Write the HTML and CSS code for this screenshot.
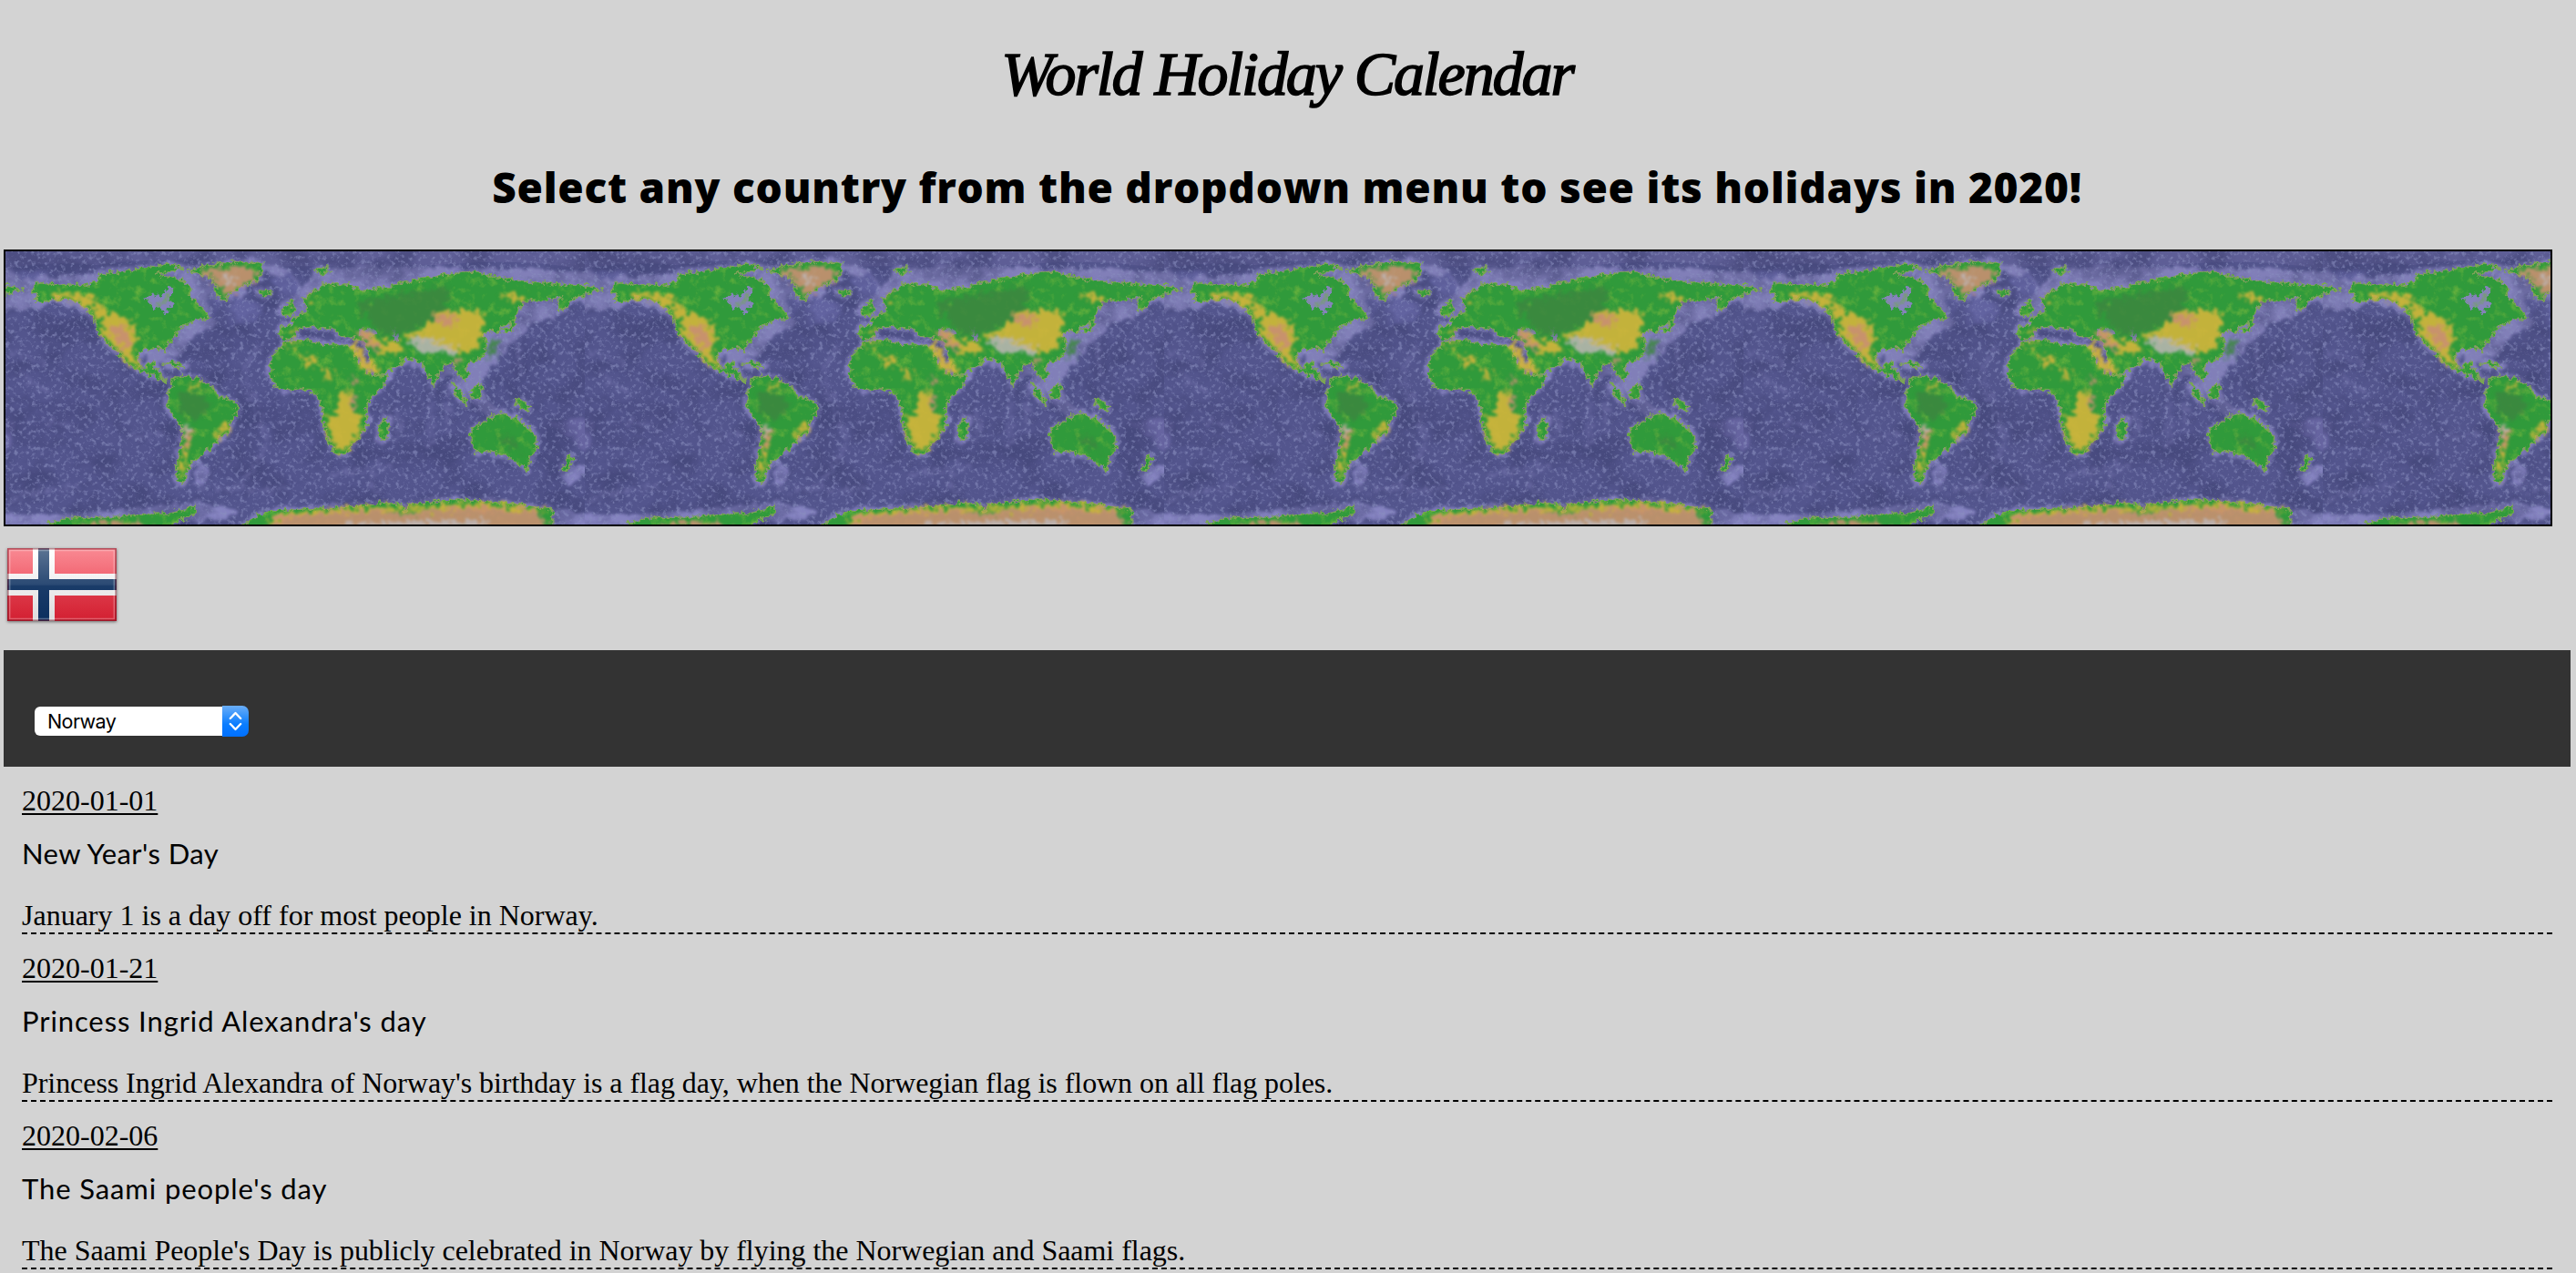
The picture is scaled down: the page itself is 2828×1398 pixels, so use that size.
FILE: index.html
```html
<!DOCTYPE html>
<html lang="en">
<head>
<meta charset="utf-8">
<title>World Holiday Calendar</title>
<link rel="stylesheet" href="styles.css">
</head>
<body>
<header>
  <h1 class="title">World Holiday Calendar</h1>
  <h2 class="subtitle">Select any country from the dropdown menu to see its holidays in 2020!</h2>
</header>

<div class="map">
<svg class="map-art" viewBox="0 0 2794 300" preserveAspectRatio="none" aria-hidden="true">
  <defs>
    <clipPath id="tile"><path d="M0 0h1908v900H0z"/></clipPath>
    <filter id="coast" x="-2%" y="-2%" width="104%" height="104%" color-interpolation-filters="sRGB">
      <feTurbulence type="fractalNoise" baseFrequency="0.07" numOctaves="3" seed="4" result="n"/>
      <feDisplacementMap in="SourceGraphic" in2="n" scale="30" xChannelSelector="R" yChannelSelector="G" result="d"/>
      <feTurbulence type="fractalNoise" baseFrequency="0.03" numOctaves="5" seed="31"/>
      <feColorMatrix values="0 0 0 0 .42  0 0 0 0 .70  0 0 0 0 .24  2.4 0 0 0 -1.25"/>
      <feComposite in2="d" operator="in" result="s"/>
      <feMerge><feMergeNode in="d"/><feMergeNode in="s"/></feMerge>
      <feGaussianBlur stdDeviation="1.8"/>
    </filter>
    <filter id="shelf" x="-5%" y="-5%" width="110%" height="110%" color-interpolation-filters="sRGB">
      <feTurbulence type="fractalNoise" baseFrequency="0.03" numOctaves="3" seed="9" result="n"/>
      <feDisplacementMap in="SourceGraphic" in2="n" scale="36" xChannelSelector="R" yChannelSelector="G"/>
      <feGaussianBlur stdDeviation="5"/>
    </filter>
    <filter id="relief" x="-5%" y="-5%" width="110%" height="110%" color-interpolation-filters="sRGB">
      <feTurbulence type="fractalNoise" baseFrequency="0.06" numOctaves="4" seed="12" result="n"/>
      <feDisplacementMap in="SourceGraphic" in2="n" scale="65" xChannelSelector="R" yChannelSelector="G"/>
      <feGaussianBlur stdDeviation="4.5"/>
    </filter>
    <filter id="seafloor" x="0" y="0" width="100%" height="100%" color-interpolation-filters="sRGB">
      <feTurbulence type="fractalNoise" baseFrequency="0.07" numOctaves="4" seed="21"/>
      <feColorMatrix values="0 0 0 0 .54  0 0 0 0 .56  0 0 0 0 .75  4 0 0 0 -2.1"/>
    </filter>
    <filter id="swell" x="0" y="0" width="100%" height="100%" color-interpolation-filters="sRGB">
      <feTurbulence type="fractalNoise" baseFrequency="0.008 0.01" numOctaves="5" seed="5"/>
      <feColorMatrix values="0 0 0 0 .24  0 0 0 0 .25  0 0 0 0 .44  3 0 0 0 -1.2"/>
    </filter>

    <g id="land">
      <path d="M112 128L138 122 200 130 300 128 325 112 330 92 400 85 470 72 560 62 600 72 560 85 510 92 560 104 600 112 630 140 620 165 640 175 650 195 680 215 688 240 650 240 620 255 590 275 575 300 548 325 545 350 532 338 500 336 462 345 452 368 458 398 480 402 490 382 510 385 505 404 525 412 530 432 548 446 515 436 480 418 440 402 415 385 395 355 370 335 345 310 322 285 318 250 295 215 260 185 220 175 180 170 145 188 115 178 128 160 108 150Z"/>
      <path d="M618 82L690 62 790 50 868 60 858 90 850 112 800 135 765 148 740 180 715 168 708 130 690 100Z"/>
      <path d="M568 440L600 428 650 438 690 455 715 490 780 520 782 548 760 575 755 610 725 630 690 670 655 695 630 715 610 760 600 785 580 770 585 710 598 650 600 600 570 560 552 525 556 480Z"/>
      <path d="M180 930L160 915 230 896 360 894 470 884 560 882 610 870 645 850 645 880 600 900 540 930Z"/>
      <path d="M790 930L850 888 920 870 1030 866 1130 862 1260 846 1320 852 1335 878 1350 852 1480 838 1560 838 1700 852 1820 870 1820 930Z"/>
      <path d="M545 388l30-6 30 12-8 6-35-6zM850 152l30-6 12 12-20 8zM1038 80l40-8 5 12-25 8zM0 130L40 134 70 146 20 156 -20 150Z"/>
      <path d="M925 210L945 195 958 180 975 215 970 228 935 228ZM925 268L960 262 965 240 985 228 1010 215 1000 172 1030 150 1080 122 1150 130 1190 150 1280 135 1360 112 1420 105 1480 92 1560 84 1640 105 1740 120 1860 128 1990 134 1990 145 1930 160 1880 175 1870 205 1840 212 1838 185 1850 168 1790 180 1720 182 1700 230 1685 255 1650 265 1645 285 1620 280 1590 290 1605 320 1595 360 1555 385 1530 395 1545 420 1535 445 1505 415 1490 385 1465 395 1440 430 1428 460 1412 430 1390 385 1360 372 1320 372 1330 385 1275 415 1240 425 1215 360 1205 320 1180 305 1130 300 1100 275 1050 270 1010 265 980 275 965 305 935 310 922 290Z"/>
      <path d="M940 320L1000 308 1030 315 1060 325 1130 325 1165 335 1180 380 1225 430 1278 425 1265 460 1220 500 1205 540 1210 590 1175 640 1140 680 1112 688 1090 660 1065 590 1062 540 1050 500 1020 475 975 472 940 478 905 460 890 420 892 370 915 345ZM1250 590l20-25 12 20-12 50-20 5z"/>
      <path d="M1555 600L1590 585 1620 560 1660 550 1690 575 1700 560 1720 580 1765 630 1768 665 1745 700 1735 740 1700 710 1660 690 1610 675 1570 682 1558 650 1548 625ZM1490 450l35 40 12 35-35-30zM1555 475l25-25 8 25-15 30-20-5zM1700 505l25 5 25 25-15 5-35-15zM1655 280l20-10 20-30 5 20-25 25zM1850 740l25-50 12 12-18 38z"/>
    </g>

    <g id="world" clip-path="url(#tile)">
      <rect width="1908" height="900" fill="#53558d"/>
      <path d="M0 0H1908V60Q1700 20 1430 45L900 50Q550 10 300 45Q130 30 0 60Z" fill="#5e5e96"/>
      <g filter="url(#shelf)" fill="none">
        <g transform="translate(-18 -18)">
          <path d="M-40 85Q130 75 160 105L320 85Q420 60 600 66T950 70L1000 150Q1010 60 1240 65T1460 75Q1680 70 2000 90V205Q1890 175 1850 185L1830 235 1755 250 1700 310 1640 370 1590 440 1600 500 1660 560 1620 580 1550 500 1480 420H1400L1240 300 960 240 900 215 960 140 880 80 820 140 740 250Q640 280 600 350L500 400 450 320 190 180Q120 220 -40 205Z" fill="#817fb8"/>
          <path d="M30 90q60-25 140 0l-60 20zM680 180l80-20 110 30-20 60-120 20zM890 110l70-20 30 60-60 30z" fill="#6263a0"/>
          <use href="#land" stroke="#807dba" stroke-width="20" stroke-linejoin="round"/>
          <path d="M-40 570l95 10-35 105-60 5zM1800 580l190-15-60 110-60-50z" fill="#6664a0"/>
          <path d="M640 790L690 760 650 700M60 890Q300 890 650 845L780 880 670 905 -40 940V875ZM1836 875l160 5v60h-160zM1845 760l60-30 70 0-60 20-40 40z" fill="#8583c0" stroke="#8583c0" stroke-width="6"/>
        </g>
      </g>
      <rect width="1908" height="900" filter="url(#swell)" opacity=".5"/>
      <g transform="translate(-18 -18)">
        <path d="M860 330q-80 80-40 150t60 150q-20 100-100 160M1260 700q-60 60-20 120M1420 450v220M1480 450l-10 180M1260 520l60 60-20 60M1090 750l200-20M30 350l120 35M60 410l100 80M430 630l110-10M140 575l110 20M30 830l220-40M640 790l220 20 90-25M1700 300l20 120" fill="none" stroke="#7b7ab3" stroke-width="10" opacity=".55" filter="url(#relief)"/>
      </g>
      <rect width="1908" height="900" filter="url(#seafloor)" opacity=".6"/>
      <g transform="translate(-18 -18)">
        <g filter="url(#coast)">
          <use href="#land" fill="#309a3b" stroke="#7fa358" stroke-width="5"/>
          <path d="M475 172l30-16 25 14 22-34 18 6-12 30 18 24-20 8-8 28-14-22-30-8z" fill="#8583bb"/>
          <path d="M1178 280l40-10 30 16-30 12-35-4zM1288 268l18 4 10 50-16-4z" fill="#7b7bad"/>
        </g>
        <g filter="url(#relief)">
          <path d="M590 480l70 5 40 40-50 50-60-20zM1170 190l140-30 170-30-10 90-120 60-90 20zM1620 305l30 10-20 50-30 10zM1640 620l60 20 20 40-60-20z" fill="#3c8640" opacity=".85"/>
          <path d="M160 155L202 155 300 158 315 190 370 225 430 250 440 310 430 345 452 395 440 400 395 355 330 290 335 250 290 205 220 170 170 170ZM618 455l30-5-15 30zM690 640l50-70 10 30-40 30zM588 760l5-50 15-110 20 5-20 100-10 60zM1070 565L1100 550 1108 485 1150 475 1155 540 1185 560 1180 610 1150 660 1112 682 1085 640zM1145 320l20-5 40 60 40 30-30 20-30-30zM1160 285l40-10 50 40 50-5 30 30-60 20-60-45zM1320 295l80-30 30-50 130-10 30 30-20 100-60 20-100-40zM1630 158l60 0 50 15-40 8zM1000 165l25-20-10 40zM950 275l25 0-20 30zM980 360l60 0-20 40zM1065 395l30 30-30 20zM930 325l50-10-20 15zM860 905l60-25 320-25 80 8 250-18 200 20 20 12-400-10-400 20-100 25z" transform="translate(6 2)" fill="#d4b53c" opacity=".9"/>
          <path d="M648 88L700 74 800 66 846 78 840 110 765 145 738 168 718 122ZM350 255l60 5 20 45-15 45-45-50zM600 600l28 0-5 50-15 20zM210 940l90-28 150-4 70 32zM850 940l70-50 330-22 60 12 40-4 210-20 210 18 35 66zM1150 490l25 10-20 50zM1165 275l30 5 60 60-30 0zM1420 225l80 0-10 40-60-10zM1490 370l20 0 0 25-20-5zM1150 430l25 10-10 25z" transform="translate(4 2)" fill="#c98f72" opacity=".9"/>
          <path d="M1345 308l35-10 60 20 75 25-15 18-40-15-50 15-40-20zM1120 938l20-24 450-10 20 34zM720 105l60-5-30 30zM605 600l16-5-2 40z" fill="#bdb6b6" opacity=".85"/>
        </g>
      </g>
    </g>
  </defs>
  <use href="#world" transform="scale(.33333)"/>
  <use href="#world" transform="translate(636 0) scale(.33333)"/>
  <use href="#world" transform="translate(1272 0) scale(.33333)"/>
  <use href="#world" transform="translate(1908 0) scale(.33333)"/>
  <use href="#world" transform="translate(2544 0) scale(.33333)"/>
</svg>
</div>

<svg class="flag" viewBox="0 0 120 80" role="img" aria-label="Flag of Norway">
  <defs>
    <linearGradient id="gloss" x1="0" y1="0" x2="0" y2="1">
      <stop offset="0" stop-color="#fff" stop-opacity=".33"/>
      <stop offset=".5" stop-color="#fff" stop-opacity=".13"/>
      <stop offset=".52" stop-color="#fff" stop-opacity=".06"/>
      <stop offset="1" stop-color="#fff" stop-opacity="0"/>
    </linearGradient>
    <linearGradient id="red" x1="0" y1="0" x2="0" y2="1">
      <stop offset="0" stop-color="#f6505e"/>
      <stop offset=".45" stop-color="#ee4655"/>
      <stop offset=".6" stop-color="#db2f3f"/>
      <stop offset="1" stop-color="#d31f31"/>
    </linearGradient>
    <linearGradient id="white" x1="0" y1="0" x2="0" y2="1">
      <stop offset="0" stop-color="#fff"/>
      <stop offset="1" stop-color="#dcdcdc"/>
    </linearGradient>
  </defs>
  <path fill="url(#red)" d="M0 0h120v80H0z"/>
  <path fill="url(#white)" d="M28 0h24v28h68v24H52v28H28V52H0V28h28z"/>
  <path fill="#0b2f5f" d="M34 0h12v34h74v12H46v34H34V46H0V34h34z"/>
  <path fill="url(#gloss)" d="M0 0h120v80H0z"/>
  <path fill="none" stroke="#fff" stroke-opacity=".28" stroke-width="1.5" d="M2.700 2.500h114.600v75H2.700z"/>
  <path fill="none" stroke="#6d1020" stroke-opacity=".5" stroke-width="1.600" d="M.8.8h118.400v78.400H.8z"/>
</svg>

<nav class="bar">
  <div class="select">
    <span class="select-value">Norway</span>
    <span class="select-button">
      <svg viewBox="0 0 29 34" width="29" height="34"><path d="M8.800 14l5.700-6 5.700 6M8.800 20l5.700 6 5.700-6" fill="none" stroke="#fff" stroke-width="2.300" stroke-linecap="round" stroke-linejoin="round"/></svg>
    </span>
  </div>
</nav>

<main class="holidays">
  <article class="holiday">
    <div class="date">2020-01-01</div>
    <h3 class="name name-short">New Year's Day</h3>
    <p class="description">January 1 is a day off for most people in Norway.</p>
  </article>
  <article class="holiday">
    <div class="date">2020-01-21</div>
    <h3 class="name">Princess Ingrid Alexandra's day</h3>
    <p class="description description-long">Princess Ingrid Alexandra of Norway's birthday is a flag day, when the Norwegian flag is flown on all flag poles.</p>
  </article>
  <article class="holiday">
    <div class="date">2020-02-06</div>
    <h3 class="name">The Saami people's day</h3>
    <p class="description description-medium">The Saami People's Day is publicly celebrated in Norway by flying the Norwegian and Saami flags.</p>
  </article>
</main>
</body>
</html>
```
FILE: styles.css
```css
* { box-sizing: border-box; }

body {
  margin: 0;
  padding: 0 6px 0 4px;
  height: 1398px;
  overflow: hidden;
  background: #d3d3d3;
  color: #000;
  font-family: "Liberation Serif", "Times New Roman", serif;
  font-size: 32px;
}

h1, h2, h3, p { margin: 0; }

header {
  height: 274px;
  padding-top: 39px;
  text-align: center;
}

.title {
  font-family: "Apple Chancery", "Liberation Serif", serif;
  font-style: italic;
  font-weight: 400;
  font-size: 68px;
  line-height: 84px;
  letter-spacing: -2.1px;
  -webkit-text-stroke: 1.6px #000;
}

.subtitle {
  margin-top: 50px;
  font-family: "Gill Sans", "Open Sans", sans-serif;
  font-weight: 800;
  font-size: 46px;
  line-height: 64px;
  letter-spacing: 0.74px;
  white-space: nowrap;
}

.map {
  width: 2798px;
  height: 304px;
  border: 2px solid #000;
  overflow: hidden;
}

.map-art { display: block; width: 2794px; height: 300px; }

.flag {
  display: block;
  width: 120px;
  height: 80px;
  margin: 24px 0 32px 4px;
  box-shadow: 0 1px 3px rgba(0, 0, 0, .5);
}

.bar {
  height: 128px;
  padding: 61px 34px 0;
  background: #333;
}

.select {
  display: flex;
  align-items: center;
  width: 235px;
  height: 34px;
}

.select-value {
  flex: 1;
  height: 32px;
  padding-left: 14px;
  border-radius: 6px 0 0 6px;
  background: #fff;
  font: 21.5px/33px Inter, sans-serif;
  letter-spacing: -0.6px;
}

.select-button {
  width: 29px;
  height: 34px;
  border-radius: 0 7px 7px 0;
  background: linear-gradient(#6aaef8, #0a7dff 60%, #0070ff);
}

.select-button svg { display: block; }

.holidays { padding: 0 20px; }

.holiday {
  height: 184px;
  padding-top: 19px;
  border-bottom: 2px dashed #000;
}

.date {
  line-height: 36px;
  text-decoration: underline;
  text-decoration-thickness: 2px;
  text-underline-offset: 3px;
}

.name {
  margin-top: 20px;
  font-family: Papyrus, Lato, sans-serif;
  font-weight: 400;
  font-size: 31px;
  line-height: 40px;
  letter-spacing: 0.9px;
}

.name-short { letter-spacing: 0.4px; }

.description {
  margin-top: 30px;
  line-height: 36px;
}

.description-long { letter-spacing: -0.06px; }
.description-medium { letter-spacing: -0.03px; }
```
